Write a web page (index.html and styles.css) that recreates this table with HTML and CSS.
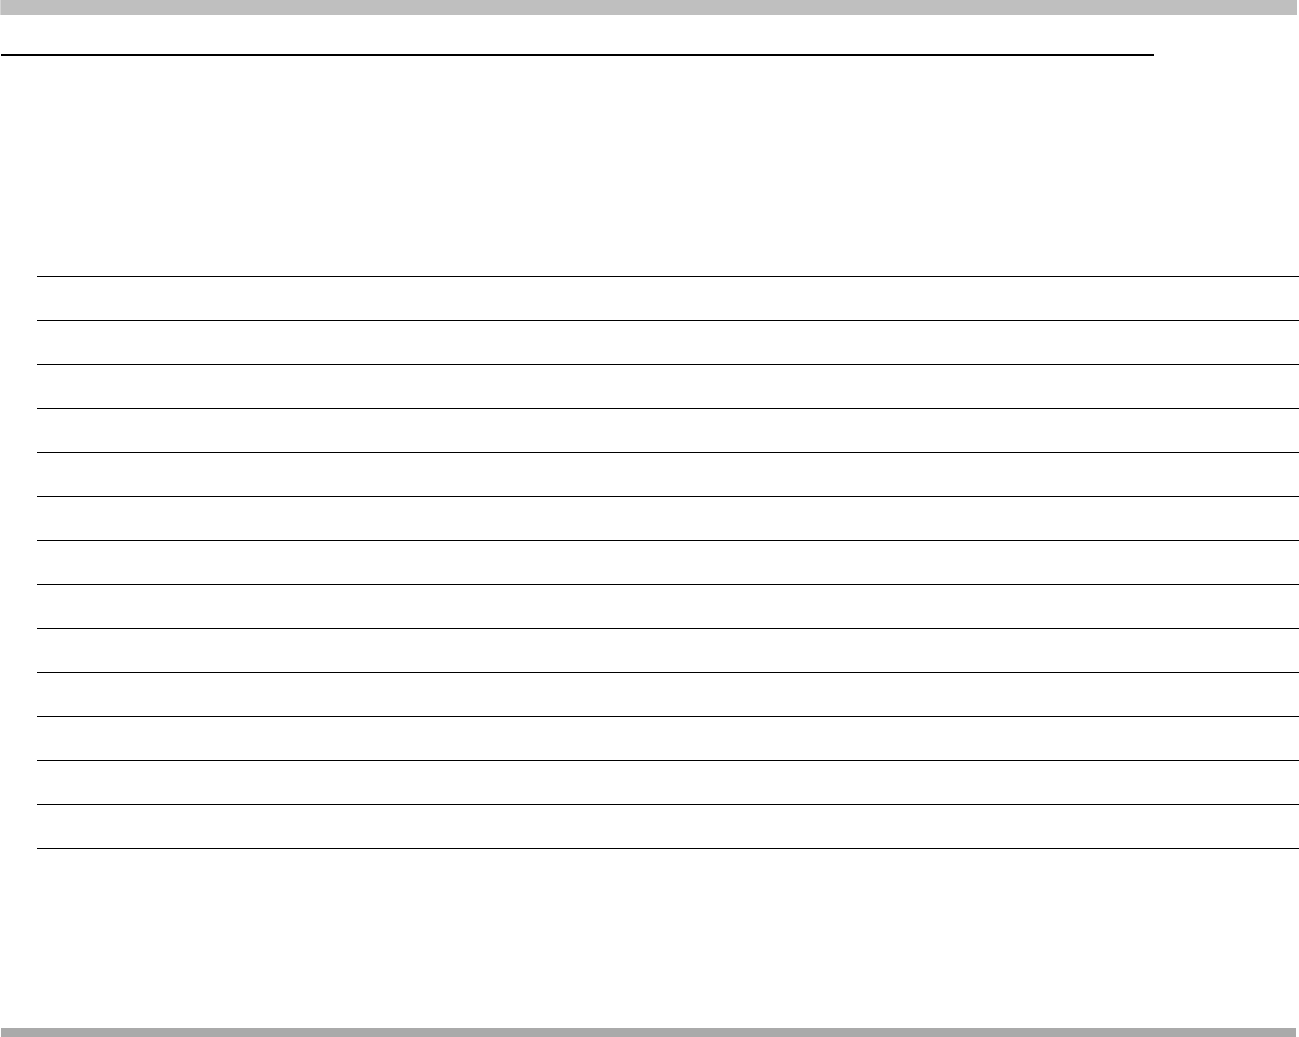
FILE: index.html
```html
<!DOCTYPE html>
<html>
<head>
<meta charset="utf-8">
<link rel="stylesheet" href="styles.css">
</head>
<body>
<div class="page">
  <div class="top-bar"></div>
  <div class="title-rule"></div>
  <div class="ruled">
    <div class="row"></div><div class="row"></div><div class="row"></div><div class="row"></div>
    <div class="row"></div><div class="row"></div><div class="row"></div><div class="row"></div>
    <div class="row"></div><div class="row"></div><div class="row"></div><div class="row"></div>
    <div class="row"></div>
  </div>
  <div class="bottom-bar"></div>
</div>
</body>
</html>
```
FILE: styles.css
```css
html, body {
  margin: 0;
  padding: 0;
  background: #ffffff;
  font-family: "Liberation Sans", Arial, sans-serif;
}
.page {
  display: flex;
  flex-direction: column;
  height: 1037px;
}
.top-bar {
  height: 15px;
  margin-right: 2px;
  background: #bfbfbf;
  border-left: 1px solid #d4d4d4;
  flex: none;
}
.title-rule {
  margin-top: 39px;
  margin-left: 1px;
  width: 1153px;
  height: 2px;
  background: #000000;
  flex: none;
}
.ruled {
  margin-top: 220px;
  margin-left: 37px;
  border-bottom: 1px solid #000000;
  flex: none;
}
.row {
  height: 43px;
  border-top: 1px solid #000000;
}
.bottom-bar {
  margin-top: auto;
  margin-left: 1px;
  margin-right: 3px;
  height: 9px;
  background: #aaaaaa;
  flex: none;
}
```
